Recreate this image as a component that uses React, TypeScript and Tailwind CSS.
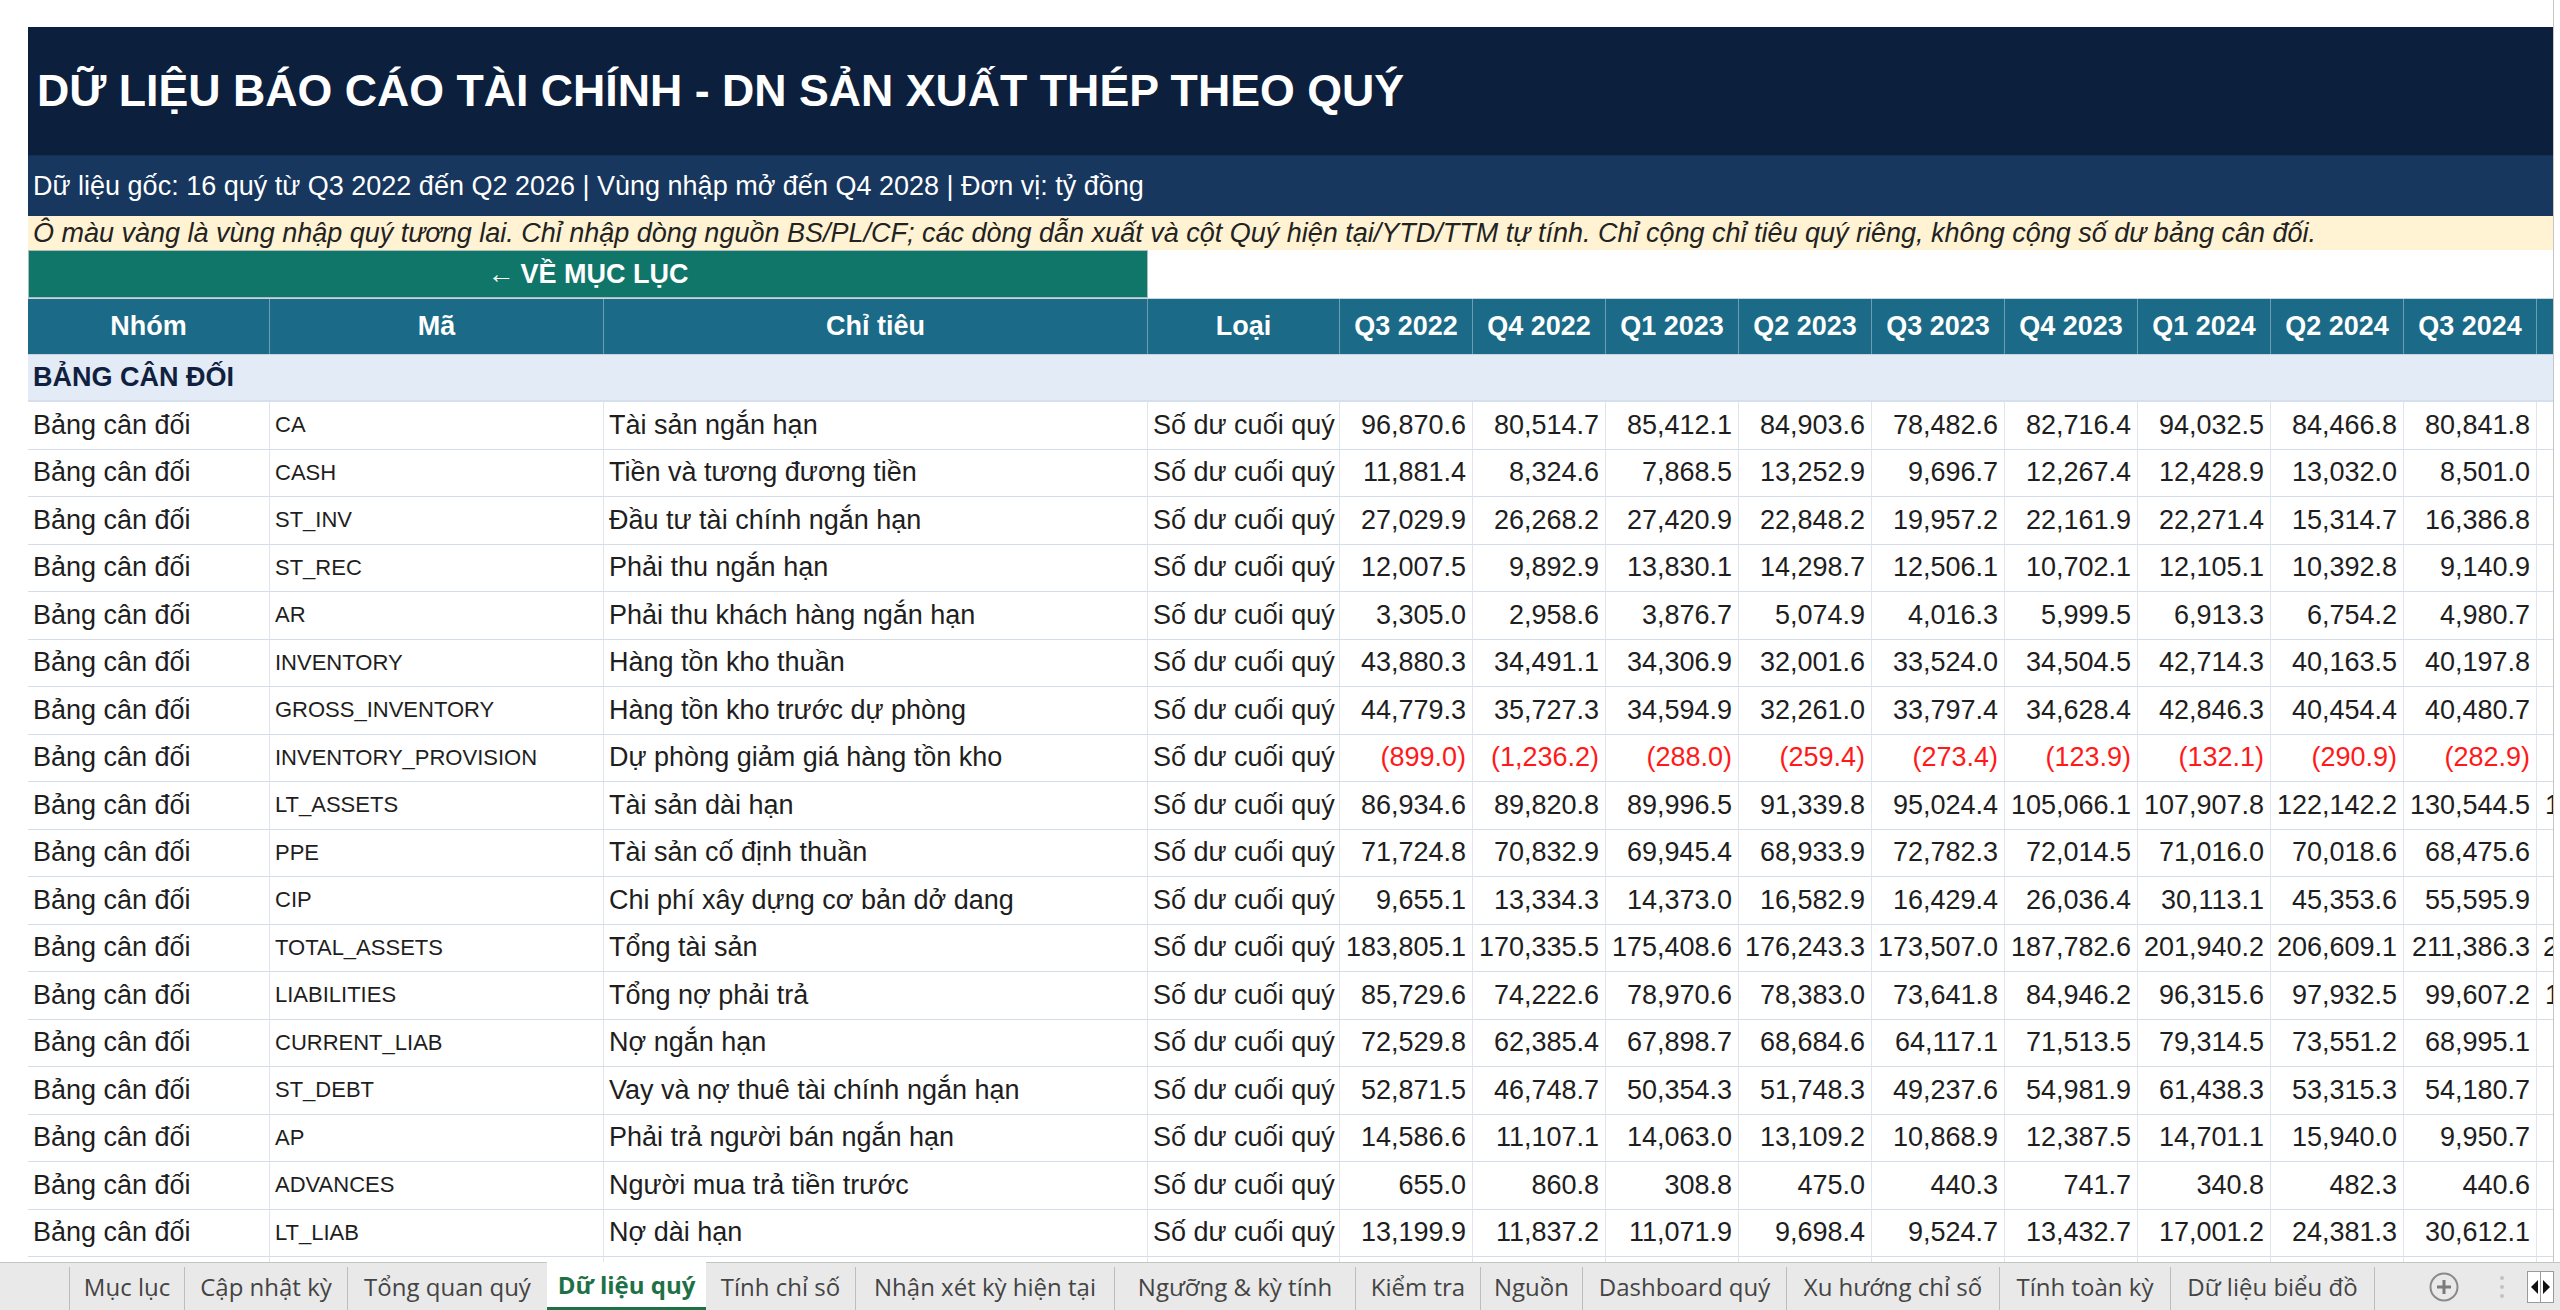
import React from 'react';

const QUARTERS = ['Q3 2022', 'Q4 2022', 'Q1 2023', 'Q2 2023', 'Q3 2023', 'Q4 2023', 'Q1 2024', 'Q2 2024', 'Q3 2024'];

// [mã, chỉ tiêu, giá trị theo quý, giá trị cột kế tiếp (bị cắt ở mép phải)]
const ROWS: [string, string, number[], number | null][] = [
  ['CA', 'Tài sản ngắn hạn', [96870.6, 80514.7, 85412.1, 84903.6, 78482.6, 82716.4, 94032.5, 84466.8, 80841.8], null],
  ['CASH', 'Tiền và tương đương tiền', [11881.4, 8324.6, 7868.5, 13252.9, 9696.7, 12267.4, 12428.9, 13032.0, 8501.0], null],
  ['ST_INV', 'Đầu tư tài chính ngắn hạn', [27029.9, 26268.2, 27420.9, 22848.2, 19957.2, 22161.9, 22271.4, 15314.7, 16386.8], null],
  ['ST_REC', 'Phải thu ngắn hạn', [12007.5, 9892.9, 13830.1, 14298.7, 12506.1, 10702.1, 12105.1, 10392.8, 9140.9], null],
  ['AR', 'Phải thu khách hàng ngắn hạn', [3305.0, 2958.6, 3876.7, 5074.9, 4016.3, 5999.5, 6913.3, 6754.2, 4980.7], null],
  ['INVENTORY', 'Hàng tồn kho thuần', [43880.3, 34491.1, 34306.9, 32001.6, 33524.0, 34504.5, 42714.3, 40163.5, 40197.8], null],
  ['GROSS_INVENTORY', 'Hàng tồn kho trước dự phòng', [44779.3, 35727.3, 34594.9, 32261.0, 33797.4, 34628.4, 42846.3, 40454.4, 40480.7], null],
  ['INVENTORY_PROVISION', 'Dự phòng giảm giá hàng tồn kho', [-899.0, -1236.2, -288.0, -259.4, -273.4, -123.9, -132.1, -290.9, -282.9], null],
  ['LT_ASSETS', 'Tài sản dài hạn', [86934.6, 89820.8, 89996.5, 91339.8, 95024.4, 105066.1, 107907.8, 122142.2, 130544.5], 138211.4],
  ['PPE', 'Tài sản cố định thuần', [71724.8, 70832.9, 69945.4, 68933.9, 72782.3, 72014.5, 71016.0, 70018.6, 68475.6], null],
  ['CIP', 'Chi phí xây dựng cơ bản dở dang', [9655.1, 13334.3, 14373.0, 16582.9, 16429.4, 26036.4, 30113.1, 45353.6, 55595.9], null],
  ['TOTAL_ASSETS', 'Tổng tài sản', [183805.1, 170335.5, 175408.6, 176243.3, 173507.0, 187782.6, 201940.2, 206609.1, 211386.3], 221331.8],
  ['LIABILITIES', 'Tổng nợ phải trả', [85729.6, 74222.6, 78970.6, 78383.0, 73641.8, 84946.2, 96315.6, 97932.5, 99607.2], 104118.9],
  ['CURRENT_LIAB', 'Nợ ngắn hạn', [72529.8, 62385.4, 67898.7, 68684.6, 64117.1, 71513.5, 79314.5, 73551.2, 68995.1], null],
  ['ST_DEBT', 'Vay và nợ thuê tài chính ngắn hạn', [52871.5, 46748.7, 50354.3, 51748.3, 49237.6, 54981.9, 61438.3, 53315.3, 54180.7], null],
  ['AP', 'Phải trả người bán ngắn hạn', [14586.6, 11107.1, 14063.0, 13109.2, 10868.9, 12387.5, 14701.1, 15940.0, 9950.7], null],
  ['ADVANCES', 'Người mua trả tiền trước', [655.0, 860.8, 308.8, 475.0, 440.3, 741.7, 340.8, 482.3, 440.6], null],
  ['LT_LIAB', 'Nợ dài hạn', [13199.9, 11837.2, 11071.9, 9698.4, 9524.7, 13432.7, 17001.2, 24381.3, 30612.1], null],
];

const TABS = [
  { name: 'Mục lục', w: 'w-[115px]' },
  { name: 'Cập nhật kỳ', w: 'w-[163px]' },
  { name: 'Tổng quan quý', w: 'w-[200px]' },
  { name: 'Dữ liệu quý', w: 'w-[159px]', active: true },
  { name: 'Tính chỉ số', w: 'w-[149px]' },
  { name: 'Nhận xét kỳ hiện tại', w: 'w-[259px]' },
  { name: 'Ngưỡng & kỳ tính', w: 'w-[241px]' },
  { name: 'Kiểm tra', w: 'w-[125px]' },
  { name: 'Nguồn', w: 'w-[102px]' },
  { name: 'Dashboard quý', w: 'w-[204px]' },
  { name: 'Xu hướng chỉ số', w: 'w-[213px]' },
  { name: 'Tính toàn kỳ', w: 'w-[171px]' },
  { name: 'Dữ liệu biểu đồ', w: 'w-[204px]' },
];

const gridCols = 'grid grid-cols-[242px_334px_544px_192px_repeat(10,133px)]';
const cellClassName =
  'h-[47.5px] flex items-center px-[5px] border-r border-b border-r-[#dfe5ee] border-b-[#d3dce8] overflow-hidden whitespace-nowrap';
const headCellClassName = 'h-[55px] flex items-center justify-center border-r border-[#6e9db2] font-bold text-white';

function fmt(v: number) {
  const s = Math.abs(v).toLocaleString('en-US', { minimumFractionDigits: 1, maximumFractionDigits: 1 });
  return v < 0 ? `(${s})` : s;
}

export default function App() {
  return (
    <div className="w-[2560px] h-[1310px] flex flex-col bg-white overflow-hidden font-['Liberation_Sans',Arial,sans-serif] text-[27px] leading-none text-[#1e1e1e]">
      <div className="flex-1 min-h-0 flex">
        <div className="flex-1 min-w-0 pt-[27px] pl-[28px] overflow-hidden">
          <div className="h-[128px] flex items-center pl-[9px] bg-[#0c1f3c] text-white font-bold text-[44.7px] whitespace-nowrap">
            DỮ LIỆU BÁO CÁO TÀI CHÍNH - DN SẢN XUẤT THÉP THEO QUÝ
          </div>
          <div className="h-[61px] flex items-center pl-[5px] bg-[#17375e] border-t border-[#12304f] text-white whitespace-nowrap">
            Dữ liệu gốc: 16 quý từ Q3 2022 đến Q2 2026 | Vùng nhập mở đến Q4 2028 | Đơn vị: tỷ đồng
          </div>
          <div className="h-[34px] flex items-center pl-[5px] bg-[#fff3d3] italic text-[#222] whitespace-nowrap">
            Ô màu vàng là vùng nhập quý tương lai. Chỉ nhập dòng nguồn BS/PL/CF; các dòng dẫn xuất và cột Quý hiện tại/YTD/TTM tự tính. Chỉ cộng chỉ tiêu quý riêng, không cộng số dư bảng cân đối.
          </div>
          <div className="h-[48px] flex">
            <div className="w-[1120px] flex items-center justify-center gap-[6px] bg-[#11766a] border border-[#a9bfbb] text-white font-bold">
              <span className="font-normal">←</span>
              <span>VỀ MỤC LỤC</span>
            </div>
          </div>

          <div className={`${gridCols} bg-[#1b6a87] border-t border-[#c9d6df] border-b border-b-[#c7d5e2]`}>
            {['Nhóm', 'Mã', 'Chỉ tiêu', 'Loại', ...QUARTERS].map((h) => (
              <div key={h} className={headCellClassName}>
                {h}
              </div>
            ))}
            <div className={headCellClassName} />
          </div>

          <div className="h-[47px] flex items-center pl-[5px] bg-[#e3ebf6] border-b-2 border-[#d6e0ec] font-bold text-[#10213f]">
            BẢNG CÂN ĐỐI
          </div>

          {ROWS.map(([code, name, values, next]) => (
            <div key={code} className={gridCols}>
              <div className={cellClassName}>Bảng cân đối</div>
              <div className={`${cellClassName} text-[22px]`}>{code}</div>
              <div className={cellClassName}>{name}</div>
              <div className={cellClassName}>Số dư cuối quý</div>
              {values.map((v, i) => (
                <div key={i} className={`${cellClassName} justify-end pr-[6px] ${v < 0 ? 'text-[#ff1a1a]' : ''}`}>
                  {fmt(v)}
                </div>
              ))}
              <div className={`${cellClassName} justify-end pr-[6px]`}>{next !== null ? fmt(next) : ''}</div>
            </div>
          ))}
          {/* dòng kế tiếp bị thanh sheet che */}
          <div className={gridCols}>
            {Array.from({ length: 14 }).map((_, i) => (
              <div key={i} className={cellClassName} />
            ))}
          </div>
        </div>
        <div className="w-[7px] border-l border-[#c6c6c6] bg-white" />
      </div>

      <div className="h-[48px] shrink-0 flex bg-[#e9e9e9] border-t border-[#c4c4c4] font-['Open_Sans',sans-serif] text-[24px] text-[#444]">
        <div className="w-[69px]" />
        {TABS.map((t, i) => {
          const afterActive = i > 0 && TABS[i - 1].active;
          return (
            <div
              key={t.name}
              className={`${t.w} flex items-center justify-center whitespace-nowrap ${
                t.active
                  ? 'bg-white text-[#1e7145] font-bold border-b-[3px] border-[#1e7145] -mt-px'
                  : afterActive
                    ? ''
                    : 'border-l border-[#bdbdbd] mt-[4px]'
              }`}
            >
              <span className={t.active || afterActive ? '' : '-mt-[4px]'}>{t.name}</span>
            </div>
          );
        })}
        <div className="border-l border-[#bdbdbd] mt-[4px]" />
        <div className="flex-1 flex items-center justify-end pr-[6px]">
          <svg width="30" height="30" viewBox="0 0 30 30" className="mr-[40px]">
            <circle cx="15" cy="15" r="13.5" fill="none" stroke="#8a8a8a" strokeWidth="2" />
            <path d="M15 8v14M8 15h14" stroke="#7a7a7a" strokeWidth="3" />
          </svg>
          <svg width="6" height="26" viewBox="0 0 6 26" className="mr-[22px]">
            <circle cx="3" cy="4" r="2" fill="#c2c2c2" />
            <circle cx="3" cy="13" r="2" fill="#c2c2c2" />
            <circle cx="3" cy="22" r="2" fill="#c2c2c2" />
          </svg>
          <svg width="27" height="32" viewBox="0 0 27 32">
            <rect x="0.5" y="0.5" width="26" height="31" fill="#fff" stroke="#9a9a9a" />
            <line x1="13.5" y1="1" x2="13.5" y2="31" stroke="#9a9a9a" />
            <path d="M4 16l7-7v14z" fill="#111" />
            <path d="M23 16l-7-7v14z" fill="#111" />
          </svg>
        </div>
      </div>
    </div>
  );
}
